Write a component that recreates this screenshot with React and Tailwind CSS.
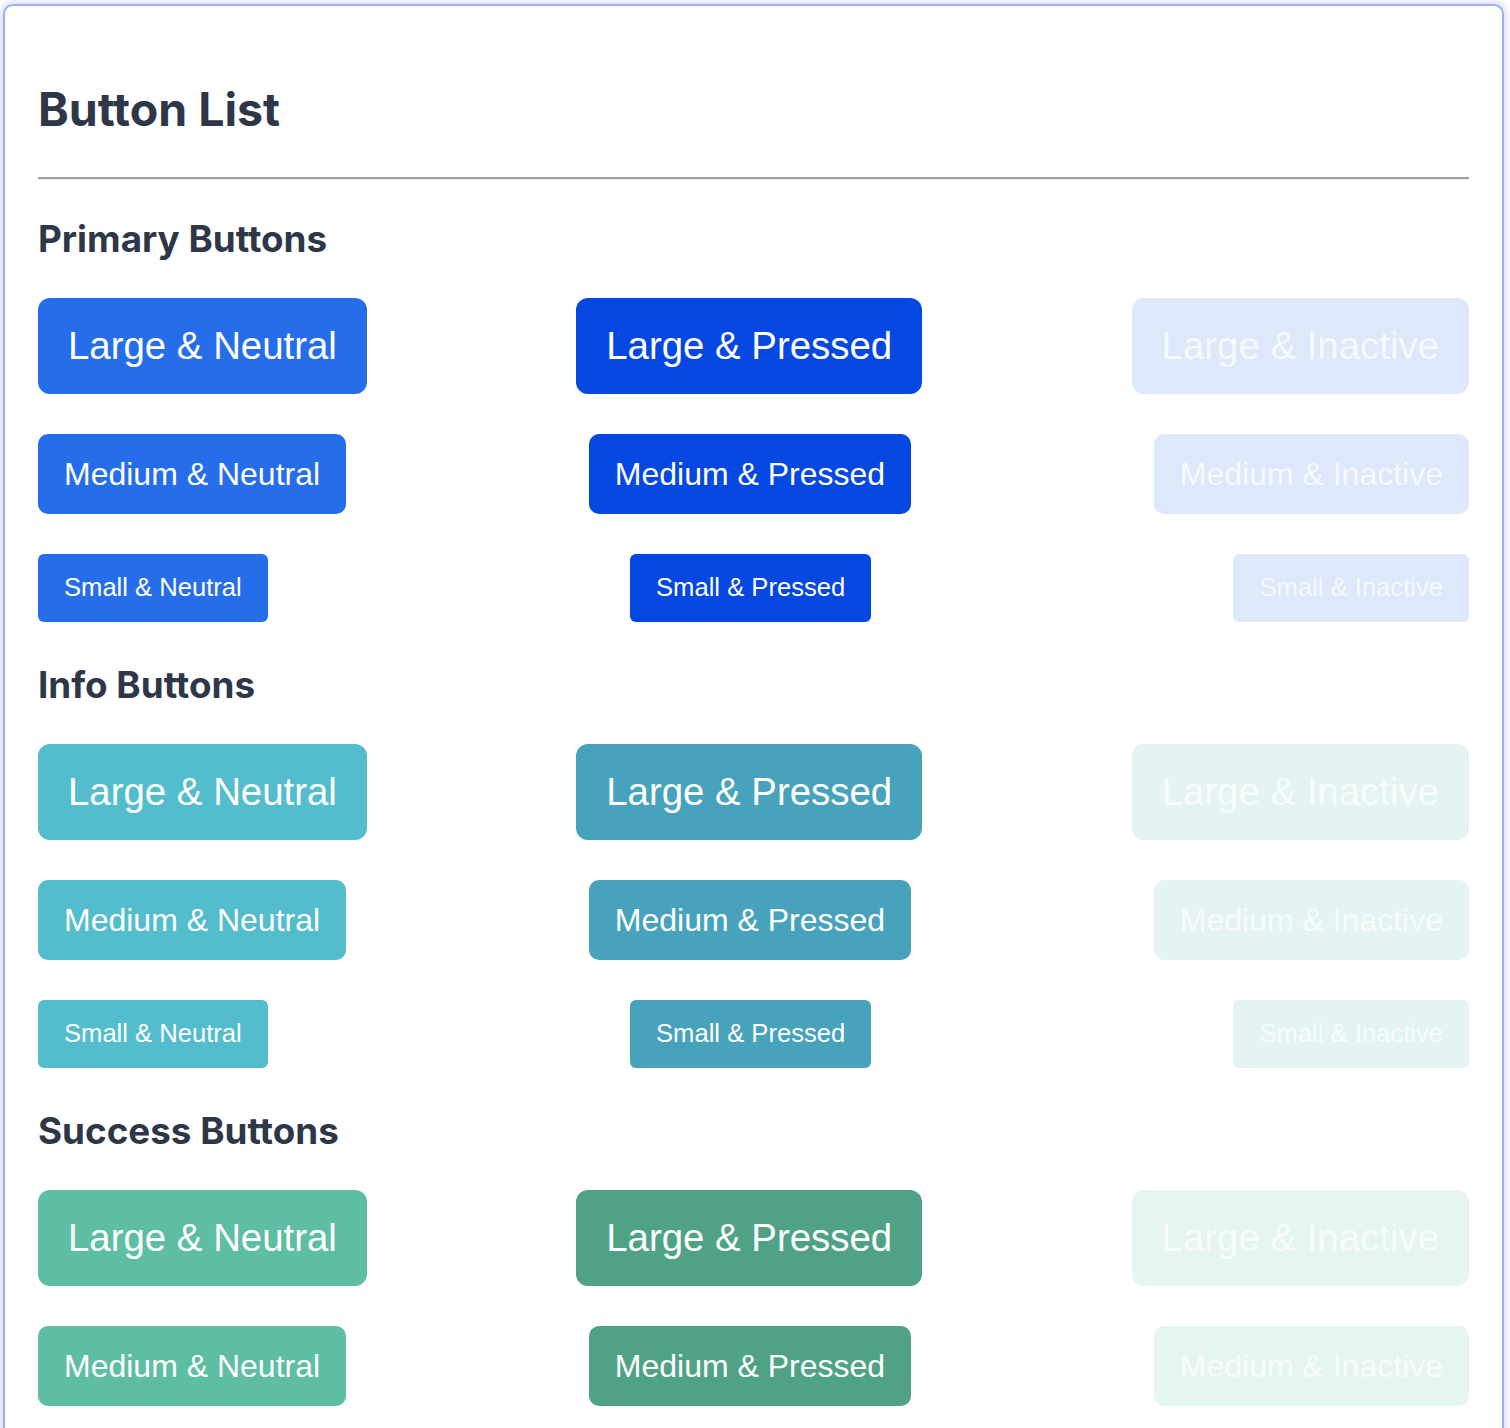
import React from "react";

const sections = [
  {
    title: "Primary Buttons",
    neutral: "bg-[#266de9]",
    pressed: "bg-[#0447e1]",
    inactive: "bg-[#dde8fa]",
  },
  {
    title: "Info Buttons",
    neutral: "bg-[#53bdcd]",
    pressed: "bg-[#47a2bc]",
    inactive: "bg-[#e3f4f2]",
  },
  {
    title: "Success Buttons",
    neutral: "bg-[#5ebea3]",
    pressed: "bg-[#4fa384]",
    inactive: "bg-[#e5f5f0]",
  },
];

const sizes = [
  { name: "Large", cls: "h-[96px] px-[30px] text-[38.4px] rounded-[12px]" },
  { name: "Medium", cls: "h-[80px] px-[26px] text-[32px] rounded-[10px]" },
  { name: "Small", cls: "h-[68px] px-[26px] text-[25.6px] rounded-[6px]" },
];

function Btn({ size, bg, label, faded }) {
  return (
    <button
      className={`flex items-center justify-center whitespace-nowrap leading-none ${size.cls} ${bg} ${
        faded ? "text-white/75" : "text-white"
      }`}
      style={{ fontFamily: '"Liberation Sans", Arial, sans-serif' }}
    >
      {label}
    </button>
  );
}

export default function App() {
  return (
    <div className="bg-white min-h-screen pt-[4px] pl-[3px] pr-[6px]">
      <div className="rounded-[10px] border-2 border-[#9cadf5] shadow-[0_0_6px_2px_rgba(140,160,245,0.4)] pl-[33px] pr-[33px] pt-[75px] pb-[40px]">
        <h1
          className="text-[46.5px] leading-[56px] font-bold text-[#2d3748]"
          style={{ fontFamily: "Inter, sans-serif" }}
        >
          Button List
        </h1>
        <div className="mt-[40px] h-[2px] bg-[#a0a0a0]" />
        <div className="h-px bg-[#ededed]" />
        <div className="flex flex-col gap-[42px] mt-[38px]">
          {sections.map((s) => (
            <div key={s.title}>
              <h2
                className="text-[36.8px] leading-[42px] font-bold text-[#2d3748] mb-[38px]"
                style={{ fontFamily: "Inter, sans-serif" }}
              >
                {s.title}
              </h2>
              <div className="flex flex-col gap-[40px]">
                {sizes.map((sz) => (
                  <div key={sz.name} className="flex items-center justify-between">
                    <Btn size={sz} bg={s.neutral} label={`${sz.name} & Neutral`} />
                    <Btn size={sz} bg={s.pressed} label={`${sz.name} & Pressed`} />
                    <Btn size={sz} bg={s.inactive} label={`${sz.name} & Inactive`} faded />
                  </div>
                ))}
              </div>
            </div>
          ))}
        </div>
      </div>
    </div>
  );
}
